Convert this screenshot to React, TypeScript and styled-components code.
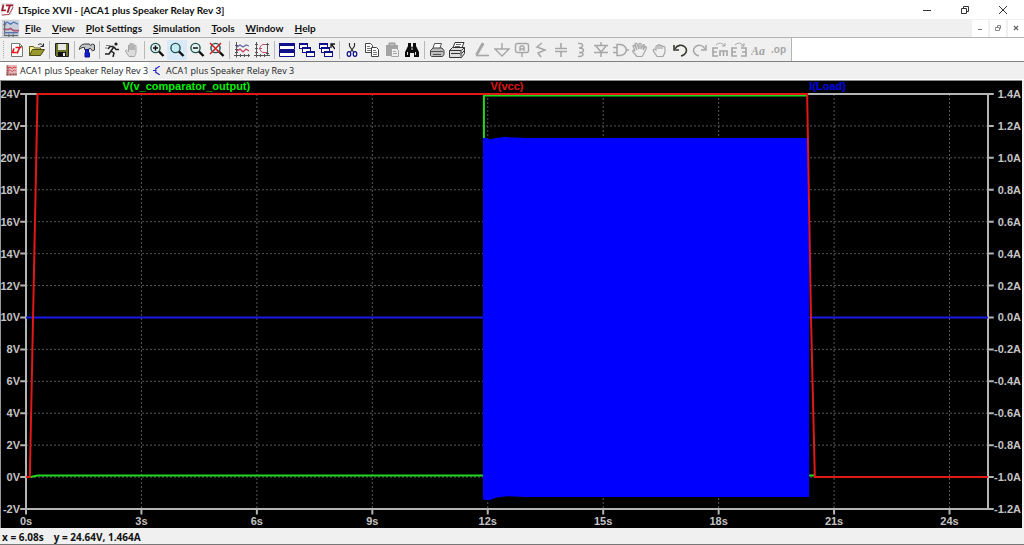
import React from 'react';
import styled, { createGlobalStyle } from 'styled-components';

const GlobalStyle = createGlobalStyle`
  * { box-sizing: border-box; }
  body { margin: 0; background: #f0f0f0; }
  button { font: inherit; color: inherit; border: 0; padding: 0; background: none; }
`;

const uiFont = '"Open Sans", "Noto Sans", sans-serif';
const boldFont = 'Lato, "Open Sans", sans-serif';
const plotFont = '"Liberation Sans", Arial, sans-serif';

const Frame = styled.div`
  display: flex;
  flex-direction: column;
  min-height: 100vh;
  font-family: ${uiFont};
  color: #111;
  background: #f0f0f0;
`;

const TitleBar = styled.header`
  display: flex;
  align-items: center;
  height: 19px;
  background: #fff;
  padding: 0 2px 0 1px;
`;

const Title = styled.h1`
  flex: 1;
  margin: 0;
  padding-left: 4px;
  font-family: ${boldFont};
  font-size: 10px;
  line-height: 18px;
  font-weight: 700;
  white-space: nowrap;
`;

const WindowButton = styled.button`
  display: flex;
  align-items: center;
  justify-content: center;
  width: 38px;
  height: 18px;
`;

const MenuBar = styled.nav`
  display: flex;
  align-items: center;
  height: 18px;
  padding-left: 2px;
  background: #f0f0f0;
`;

const MenuItems = styled.div`
  display: flex;
  flex: 1;
  gap: 11px;
  padding-left: 6px;
`;

const MenuButton = styled.button`
  font-family: ${boldFont};
  font-size: 10px;
  line-height: 18px;
  font-weight: 700;
  white-space: nowrap;

  &::first-letter { text-decoration: underline; }
`;

const ChildControls = styled.div`
  display: flex;
  gap: 2px;
`;

const ChildButton = styled.button`
  display: flex;
  align-items: center;
  justify-content: center;
  width: 16px;
  height: 17px;
  background: #fff;
`;

const ToolStrip = styled.div`
  display: flex;
  height: 25px;
  border-top: 1px solid #b4b4b4;
  border-bottom: 1px solid #808080;
  background: #fff;
`;

const ToolBar = styled.div`
  display: flex;
  align-items: center;
  padding-left: 3px;
  padding-right: 2px;
  background: #f0f0f0;
  border-right: 1px solid #b4b4b4;
`;

const Grip = styled.span`
  width: 4px;
  height: 17px;
  border-left: 1px dotted #a8a8a8;
`;

const Group = styled.div<{ $width?: number }>`
  display: flex;
  width: ${p => (p.$width ? `${p.$width}px` : 'auto')};

  & + & { margin-left: 5px; }
  & + &::before {
    content: '';
    width: 1px;
    height: 18px;
    margin: 1px 2px 0 -3px;
    background: #b8b8b8;
  }
`;

const ToolButton = styled.button<{ $active?: boolean }>`
  display: flex;
  flex: 0 1 20px;
  align-items: center;
  justify-content: center;
  width: 20px;
  min-width: 0;
  height: 20px;
  background: ${p => (p.$active ? '#d8eaf8' : 'transparent')};

  svg { flex: none; }
`;

const TabBar = styled.div`
  display: flex;
  height: 18px;
  background: #f0f0f0;
  border-bottom: 1px solid #fff;
`;

const Tab = styled.button<{ $active?: boolean }>`
  display: flex;
  align-items: center;
  gap: ${p => (p.$active ? 3 : 4)}px;
  padding: 0 1px 0 ${p => (p.$active ? 6 : 4)}px;
  font-family: ${uiFont};
  font-size: 9px;
  line-height: 16px;
  white-space: nowrap;
  color: #222;
  background: ${p => (p.$active ? '#fff' : 'transparent')};
`;

const Plot = styled.main`
  flex: 1 1 0;
  display: grid;
  grid-template-columns: 25px minmax(0, 1fr) 34px;
  grid-template-rows: 13px minmax(200px, 1fr) 19px;
  margin-right: 2px;
  border-top: 1px solid #888;
  border-left: 1px solid #999;
  background: #000;
  color: #c4c4c4;
  font-family: ${plotFont};
  font-size: 11px;
  line-height: 12px;
  font-weight: 700;
`;

const Legend = styled.div`
  grid-column: 2;
  display: flex;
  align-items: flex-start;
`;

const TraceName = styled.button<{ $color: string }>`
  flex: 1;
  line-height: 11px;
  color: ${p => p.$color};
`;

const Axis = styled.div<{ $side: 'left' | 'right' }>`
  grid-row: 2;
  grid-column: ${p => (p.$side === 'left' ? 1 : 3)};
  display: flex;
  flex-direction: column;
  justify-content: space-between;
  align-items: flex-end;
  margin: -6px 0;
  padding-right: ${p => (p.$side === 'left' ? 6 : 1)}px;
  white-space: nowrap;
`;

const TimeAxis = styled.div`
  grid-row: 3;
  grid-column: 2;
  display: flex;
  margin-left: -6%;
  padding-top: 6px;
  width: 108%;

  span { flex: 1; text-align: center; }
`;

const ChartArea = styled.div`
  grid-row: 2;
  grid-column: 2;
  display: flex;
  min-width: 0;
  min-height: 0;

  svg { display: block; width: 100%; height: 0; min-height: 100%; overflow: visible; }
  path { vector-effect: non-scaling-stroke; }
`;

const StatusBar = styled.footer`
  display: flex;
  gap: 10px;
  height: 17px;
  padding-left: 2px;
  border-bottom: 1px solid #777;
  font-size: 10px;
  line-height: 18px;
  font-weight: 700;
  white-space: nowrap;
`;

const NAVY = '#10108c';
const GREY = '#a6a6a6';

const Svg = ({ children, size = 16 }: { children: React.ReactNode; size?: number }) => (
  <svg width={size} height={size} viewBox="0 0 16 16" fill="none" aria-hidden="true">{children}</svg>
);

const Lens = ({ fill = '#e4f2f2' }: { fill?: string }) => (
  <>
    <circle cx="6.5" cy="6" r="4.6" fill={fill} stroke="#24534f" strokeWidth="1.4" />
    <path d="M10 9.5L14.5 14" stroke="#111" strokeWidth="2.4" />
  </>
);

const Win = ({ x, y }: { x: number; y: number }) => (
  <>
    <rect x={x + 0.5} y={y + 0.5} width="8" height="5" fill="#fff" stroke={NAVY} />
    <path d={`M${x} ${y + 1}h9`} stroke={NAVY} strokeWidth="2" />
  </>
);

const ChartIcon = ({ active = false }: { active?: boolean }) => (
  <>
    <path d="M2.5 0V15.5M0 13.5H16M1 3.5h3M1 7.5h3M1 10.5h3M6.5 12v3M10.5 12v3M14.5 12v3" stroke={active ? '#804040' : '#555'} />
    <path d="M3 5l3-2 3 2 3-2 3 1" stroke={active ? '#d02020' : '#6868a8'} strokeWidth="1.2" />
    <path d="M3 9l3-2 3 3 3-3 3 2" stroke="#c04060" strokeWidth="1.2" />
  </>
);

type Tool = { name: string; icon: React.ReactNode; active?: boolean };

const groups: Tool[][] = [
  [
    {
      name: 'New Schematic',
      icon: (
        <>
          <path d="M2.5 1.5h8l3 3v10h-11z" fill="#fff" stroke="#777" />
          <path d="M10.500 1.500v3h3" stroke="#777" />
          <path d="M5 6.500L3.500 10.500h4M6.500 5.500h6M10.500 6L8 11.500" stroke="#e01818" strokeWidth="1.700" />
        </>
      ),
    },
    {
      name: 'Open',
      icon: (
        <>
          <path d="M.5 13.500v-9h4l1 1.500h6v2" fill="#f4ec90" stroke="#5c5c10" />
          <path d="M.5 13.500l3-6h12l-4 6z" fill="#98982c" stroke="#4c4c10" />
          <path d="M9 3c2-2 4-1 5 1M14.500 1.500v3h-3" stroke="#222" />
        </>
      ),
    },
  ],
  [
    {
      name: 'Save',
      icon: (
        <>
          <path d="M1.500 1.500h13v13h-12l-1-1z" fill="#6c7428" stroke="#222" />
          <path d="M4 2h8v6H4z" fill="#e8e8e4" />
          <path d="M4 10h8v4H4z" fill="#111" />
          <path d="M9 11h2v3H9z" fill="#eee" />
        </>
      ),
    },
  ],
  [
    {
      name: 'Control Panel',
      icon: (
        <>
          <path d="M.5 7.500c0-3 2-5.500 5-5.500h5l1 1.500 2-1.500 2 1v5l-2 1-2-2.500H10v1H5.500V5.500C3.500 5 2 6 .5 7.500z" fill="#c0c6c8" stroke="#333" />
          <path d="M6.500 7.500h3v2.500l1 1v4H6v-4l.5-1z" fill="#1020d0" stroke={NAVY} />
        </>
      ),
    },
  ],
  [
    {
      name: 'Run',
      icon: (
        <>
          <circle cx="12" cy="2" r="1.600" fill="#222" />
          <path d="M10 4.500L7 9l3 2-1 4M7 9l-2 3H1M9.500 4.500H6L4 7M10 5l2 2.500h3" stroke="#222" strokeWidth="1.500" />
          <path d="M2 3.500h4M1 6h2" stroke="#777" />
        </>
      ),
    },
    {
      name: 'Halt',
      icon: (
        <path
          d="M5 14.500L1.500 9.500c-.5-1.500 1-2 2-.5l1 1V3.500c0-1 1.500-1 1.500 0V8 2c0-1 2-1 2 0v6-5.500c0-1 2-1 2 0V8 4c0-1 2-1 2 0v6c0 2-1 3-1.500 4.500z"
          fill="#dcdcdc" stroke={GREY}
        />
      ),
    },
  ],
  [
    { name: 'Zoom In', icon: <><Lens /><path d="M4 6h5M6.500 3.500v5" stroke="#111" strokeWidth="1.500" /></> },
    { name: 'Pan', active: true, icon: <Lens fill="#c4ecf8" /> },
    { name: 'Zoom Out', icon: <><Lens /><path d="M4 6h5" stroke="#111" strokeWidth="1.500" /></> },
    { name: 'Zoom Full', icon: <><Lens /><path d="M1 1l10 10M12 1L1 12" stroke="#d02020" strokeWidth="1.500" /></> },
  ],
  [
    { name: 'Autorange', icon: <ChartIcon /> },
    {
      name: 'Pick Visible Traces',
      icon: (
        <>
          <path d="M2.500 0v15.500M0 13.500h16M1 2.500h3M1 6.500h3M1 10.500h3M6.500 12v3M10.500 12v3" stroke="#555" />
          <path d="M13 2.500H9c-4 1-4 7 0 8h4M5 6.500h3" stroke="#c05070" />
          <path d="M13.500 1v12M12 2.500h3M12 11.500h3" stroke="#555" />
        </>
      ),
    },
  ],
  [
    {
      name: 'Tile Windows',
      icon: (
        <>
          <path d="M.5 1.500h15v6H.5zM.5 8.500h15v6H.5z" fill="#fff" stroke={NAVY} />
          <path d="M0 2.500h16M0 9.500h16" stroke={NAVY} strokeWidth="3" />
        </>
      ),
    },
    { name: 'Cascade Windows', icon: <><Win x={0} y={1} /><Win x={3} y={5} /><Win x={7} y={9} /></> },
    {
      name: 'Close All Windows',
      icon: <><Win x={0} y={1} /><Win x={2} y={5} /><Win x={5} y={9} /><path d="M16 7l-3-4M12 6V2h4" stroke="#111" strokeWidth="1.300" /></>,
    },
  ],
  [
    {
      name: 'Cut',
      icon: (
        <>
          <path d="M5.500 1v3l4 6M10.500 1v3l-4 6" stroke="#333" strokeWidth="1.200" />
          <ellipse cx="5" cy="12" rx="1.800" ry="2.300" stroke={NAVY} strokeWidth="1.200" />
          <ellipse cx="11" cy="12" rx="1.800" ry="2.300" stroke={NAVY} strokeWidth="1.200" />
        </>
      ),
    },
    {
      name: 'Copy',
      icon: (
        <>
          <path d="M1.500 1.500h5l2 2v7h-7z" fill="#fff" stroke="#444" />
          <path d="M3 4.500h3M3 6.500h4M3 8.500h4" stroke="#777" />
          <path d="M7.500 5.500h5l2 2v7h-7z" fill="#fff" stroke="#444" />
          <path d="M9 8.500h3M9 10.500h4M9 12.500h4" stroke="#777" />
        </>
      ),
    },
    {
      name: 'Paste',
      icon: (
        <>
          <path d="M2 3h12v11H2z" fill="#a4a4a4" />
          <path d="M5 1h6v3H5z" fill="#bbb" stroke="#999" />
          <path d="M7.500 6.500h5l2 2v6h-7z" fill="#eee" stroke={GREY} />
          <path d="M9 9.500h3M9 11.500h4" stroke={GREY} />
        </>
      ),
    },
    {
      name: 'Find',
      icon: (
        <>
          <path d="M4 1h3v3l1 2 1-2V1h3v3l3 6v5h-5v-4H6v4H1v-5l3-6z" fill="#0c0c0c" />
          <path d="M3.500 10v3M11.500 10v3M7 7h2" stroke="#ddd" />
        </>
      ),
    },
  ],
  [
    {
      name: 'Print',
      icon: (
        <>
          <path d="M4 6l1.500-4.500h7L11 6" fill="#fff" stroke="#555" />
          <path d="M1.500 8.500L4 6h9l2 2.500v4l-1.500 2h-11l-1-1z" fill="#bcbcbc" stroke="#444" />
          <path d="M2 9.500h12M4 12.500h8" stroke="#555" />
        </>
      ),
    },
    {
      name: 'Print Setup',
      icon: (
        <>
          <path d="M4 5.500l2-5h9l-2 5z" fill="#fff" stroke="#333" />
          <path d="M7 2.500h5M6 4.500h5" stroke="#666" />
          <path d="M.5 8.500l3-3h12v6l-3 4H.5z" fill="#ddd" stroke="#333" />
          <path d="M1 8.500h11v6M12.500 8.500l3-3M2 11.500h9M12.500 11.500l3-3" stroke="#333" />
        </>
      ),
    },
  ],
  [
    { name: 'Wire', icon: <><path d="M2 12L8 1l2 1-6 10-2 1z" fill={GREY} stroke={GREY} /><path d="M2 13.500h13" stroke={GREY} strokeWidth="1.600" /></> },
    { name: 'Ground', icon: <path d="M8 1v6M1 7h14L8 14z" stroke={GREY} strokeWidth="1.400" /> },
    { name: 'Label Net', icon: <><rect x="1.500" y="1.500" width="13" height="9" rx="2" stroke={GREY} strokeWidth="1.400" /><path d="M6 9V5l1-1h2l1 1v4M6 7h4M8 11v4" stroke={GREY} strokeWidth="1.400" /></> },
    { name: 'Resistor', icon: <path d="M9 1L4 5l8 3-7 3 3 4" stroke={GREY} strokeWidth="1.500" /> },
    { name: 'Capacitor', icon: <path d="M8 1v5M2 6.500h12M2 9.500h12M8 10v5" stroke={GREY} strokeWidth="1.600" /> },
    { name: 'Inductor', icon: <path d="M5 1.500c6-1 6 4.500 1 4.500 6 0 6 4.500 0 4.500 6 0 5 4.500-1 4" stroke={GREY} strokeWidth="1.500" /> },
    { name: 'Diode', icon: <path d="M8 0v4M1 3.500h14M3 4l5 6 5-6M1 10.500h14M8 10v5" stroke={GREY} strokeWidth="1.500" /> },
    { name: 'Component', icon: <path d="M4 2.500h4c7 2 7 9 0 11H4zM0 5.500h4M0 10.500h4M13 8h3" stroke={GREY} strokeWidth="1.500" /> },
    { name: 'Move', icon: <path d="M5 14.500L1 10c-1-2 1-2 2-1L1 4c0-1 1-1 2 0l2 4-2-6c0-1 2-1 2 0l2 5V2c0-1 2-1 2 0v5l2-4c1-1 2 0 1 1l-1 4 2-3c1-1 2 0 1 2l-3 6-1 1.500z" stroke={GREY} strokeWidth="1.200" /> },
    { name: 'Drag', icon: <path d="M5 14.500L2 10c-1-1-1-3 0-3l2 1V5c0-2 2-2 2 0v2-3c0-2 2-2 2 0v3-3c0-1 2-1 2 0v3-2c1-1 3-1 3 1v4c0 2-2 3-2 4.500z" stroke={GREY} strokeWidth="1.200" /> },
    { name: 'Undo', icon: <><path d="M3 7c2-4 7-5 10-2s1 8-4 9" stroke="#38382c" strokeWidth="1.600" /><path d="M2 3v5h5" stroke="#38382c" strokeWidth="1.600" /></> },
    { name: 'Redo', icon: <><path d="M13 7C11 3 6 2 3 5s-1 8 4 9" stroke={GREY} strokeWidth="1.500" /><path d="M14 3v5H9" stroke={GREY} strokeWidth="1.500" /></> },
    { name: 'Rotate', icon: <><path d="M6 6H1v8h5M1 10h4M8 14V9h7v5M11.500 9v5" stroke={GREY} strokeWidth="1.600" /><path d="M4 3c3-3 6-2 9 1M13 1v3h-3" stroke={GREY} /></> },
    { name: 'Mirror', icon: <><path d="M6 6H1v8h5M1 10h4M10 6h5v8h-5M11 10h4" stroke={GREY} strokeWidth="1.600" /><path d="M4 3c3-3 6-2 9 1M13 1v3h-3" stroke={GREY} /></> },
    { name: 'Text', icon: <text x="0" y="13" fontFamily="Liberation Serif, serif" fontSize="12" fontWeight="700" fontStyle="italic" fill={GREY}>Aa</text> },
    { name: 'SPICE Directive', icon: <text x="0" y="11" fontFamily="Liberation Sans, sans-serif" fontSize="10" fontWeight="700" fill={GREY}>.op</text> },
  ],
];

const menus = ['File', 'View', 'Plot Settings', 'Simulation', 'Tools', 'Window', 'Help'];

const traces = [
  { name: 'V(v_comparator_output)', color: '#00f000' },
  { name: 'V(vcc)', color: '#e01818' },
  { name: 'I(Load)', color: '#0000f0' },
];

const volts = Array.from({ length: 14 }, (_, i) => `${24 - 2 * i}V`);
const amps = Array.from({ length: 14 }, (_, i) => `${((14 - 2 * i) / 10).toFixed(1)}A`);
const times = Array.from({ length: 9 }, (_, i) => `${3 * i}s`);

const W = 1000;
const H = 520;
const rows = Array.from({ length: 14 }, (_, i) => i * 40);
const cols = Array.from({ length: 8 }, (_, i) => (i + 1) * 120);

/* 40 units per second across, 20 units per volt down from 24 V */
const Chart = () => (
  <ChartArea>
    <svg viewBox={`0 0 ${W} ${H}`} preserveAspectRatio="none" role="img" aria-label="Waveforms over 25 seconds">
      <path
        d={rows.slice(1, -1).map(y => `M0 ${y}H${W}`).join('') + cols.map(x => `M${x} 0V${H}`).join('')}
        stroke="#585858" strokeDasharray="2 2" fill="none"
      />
      <path
        d={`M0 0H${W}V${H}H0Z` + rows.map(y => `M-6 ${y}H0M${W} ${y}h6`).join('') + [0, ...cols].map(x => `M${x} ${H}v7`).join('')}
        stroke="#b4b4b4" strokeWidth="2" fill="none"
      />
      <path d="M0 480H5L12 478H475M476 56V2H812M814 478H820" stroke="#20d820" strokeWidth="2" fill="none" />
      <path d="M0 280H475M814 280H1000" stroke="#1818e8" strokeWidth="2" fill="none" />
      <path d="M475 55H478L483 57 488 55 498 54 520 55H814V505H520L500 504 488 506 482 509 475 508Z" fill="#0000ff" />
      <path d="M0 480H4L12 0H812L816 280 820 480H1000" stroke="#e01818" strokeWidth="2" fill="none" />
    </svg>
  </ChartArea>
);

export default function App() {
  return (
    <Frame>
      <GlobalStyle />
      <TitleBar>
        <Svg size={13}>
          <path d="M1 1h14l-3 13H1z" fill="#fff" stroke="#ccc" />
          <path d="M3 2L1.500 9H6M6 3h9M11 3L8 12" stroke="#a01828" strokeWidth="2.200" />
          <path d="M1 15l9-1 5-9" stroke="#a01828" />
        </Svg>
        <Title>LTspice XVII - [ACA1 plus Speaker Relay Rev 3]</Title>
        <WindowButton aria-label="Minimize"><svg width="10" height="10"><path d="M1 5.500h8" stroke="#333" /></svg></WindowButton>
        <WindowButton aria-label="Restore"><svg width="10" height="10" fill="none"><path d="M1.500 3.500h5v5h-5zM3.500 3V1.500h5v5H7" stroke="#333" /></svg></WindowButton>
        <WindowButton aria-label="Close"><svg width="10" height="10"><path d="M1 1l8 8M9 1L1 9" stroke="#333" /></svg></WindowButton>
      </TitleBar>
      <MenuBar>
        <Svg size={17}>
          <path d="M0 0h16v16H0z" fill="#c8d0dc" />
          <path d="M2.500 1v13.500H15M1 4.500h3M1 8.500h3M6.500 13v3M10.500 13v3" stroke="#666" />
          <path d="M2 4l3-2 3 2 3-2 4 2" stroke="#4068b0" />
          <path d="M2 9h4l2-1 3 2h5" stroke="#b05070" strokeWidth="1.500" />
          <path d="M3 12h12" stroke="#3858a0" />
        </Svg>
        <MenuItems>{menus.map(m => <MenuButton key={m}>{m}</MenuButton>)}</MenuItems>
        <ChildControls>
          <ChildButton aria-label="Minimize plot"><svg width="8" height="8"><path d="M2 5.500h4" stroke="#777" /></svg></ChildButton>
          <ChildButton aria-label="Restore plot"><svg width="8" height="8" fill="none"><path d="M1.500 3.500h4v3h-4zM3.500 3V1.500h3v3H6" stroke="#888" /></svg></ChildButton>
          <ChildButton aria-label="Close plot"><svg width="8" height="8"><path d="M2 2l4 4M6 2L2 6" stroke="#666" strokeWidth="1.300" /></svg></ChildButton>
        </ChildControls>
      </MenuBar>
      <ToolStrip>
        <ToolBar role="toolbar">
          <Grip />
          {groups.map((group, i) => (
            <Group key={i} $width={group.length > 10 ? 317 : undefined}>
              {group.map(t => (
                <ToolButton key={t.name} $active={t.active} aria-label={t.name}><Svg>{t.icon}</Svg></ToolButton>
              ))}
            </Group>
          ))}
        </ToolBar>
      </ToolStrip>
      <TabBar role="tablist">
        <Tab role="tab" aria-selected $active>
          <Svg size={11}><path d="M0 0h16v16H0z" fill="#e8b8b8" /><ChartIcon active /></Svg>
          ACA1 plus Speaker Relay Rev 3
        </Tab>
        <Tab role="tab" aria-selected={false}>
          <Svg size={9}><path d="M12 0L5 5v6l7 5M0 8h5M5 3v10" stroke="#2020c0" strokeWidth="2" /></Svg>
          ACA1 plus Speaker Relay Rev 3
        </Tab>
      </TabBar>
      <Plot>
        <Legend>{traces.map(t => <TraceName key={t.name} $color={t.color}>{t.name}</TraceName>)}</Legend>
        <Axis $side="left">{volts.map(v => <span key={v}>{v}</span>)}</Axis>
        <Chart />
        <Axis $side="right">{amps.map(a => <span key={a}>{a}</span>)}</Axis>
        <TimeAxis>{times.map(t => <span key={t}>{t}</span>)}</TimeAxis>
      </Plot>
      <StatusBar><span>x = 6.08s</span><span>y = 24.64V, 1.464A</span></StatusBar>
    </Frame>
  );
}
